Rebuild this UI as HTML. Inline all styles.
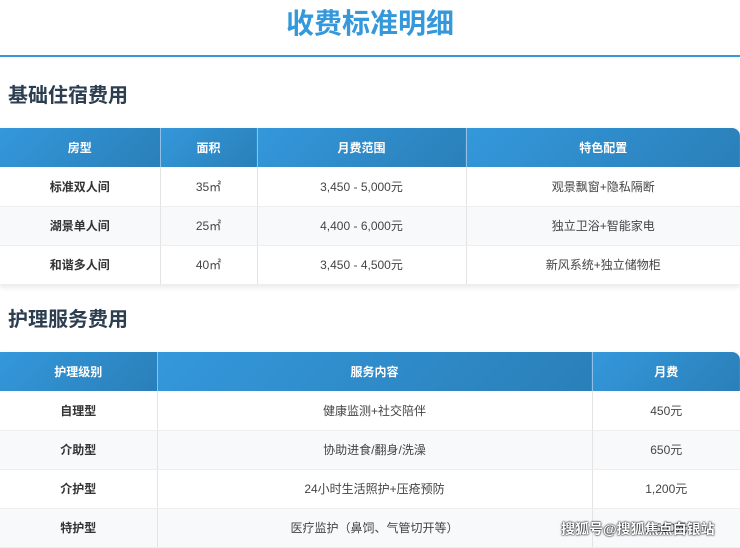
<!DOCTYPE html>
<html><head><meta charset="utf-8"><style>
*{margin:0;padding:0;box-sizing:border-box}
body{width:740px;height:547px;overflow:hidden;background:#fff;font-family:"Liberation Sans","Noto Sans CJK SC",sans-serif;position:relative}
h1{position:absolute;top:4px;left:0;width:740px;text-align:center;font-size:28px;color:#3498db;font-weight:bold;line-height:40px}
.line{position:absolute;top:55px;left:0;width:740px;height:2px;background:#3498db}
h2{position:absolute;left:8px;font-size:20px;color:#2c3e50;font-weight:bold;line-height:28px}
table{position:absolute;left:0;width:740px;border-collapse:collapse;font-size:12px;color:#444;box-shadow:0 2px 6px rgba(0,0,0,.1);border-radius:0 8px 0 0;overflow:hidden}
th{height:39px;color:#fff;font-weight:bold;background:linear-gradient(135deg,#3498db,#2a7fb8);border-right:1px solid #8fc1e6}
th:last-child{border-right:none}
td{height:39px;text-align:center;border-right:1px solid #e3e3e3;border-bottom:1px solid #eee}
td:last-child{border-right:none}
tr:nth-child(odd) td{background:#f8f9fa}
td:first-child{font-weight:bold;color:#333}
.wm{position:absolute;left:561px;top:519px;font-size:14px;color:#fff;font-weight:bold;text-shadow:0 0 2px #000,0 0 1px #000}
</style></head><body>
<h1>收费标准明细</h1>
<div class="line"></div>
<h2 style="top:82px">基础住宿费用</h2>
<table style="top:128px">
<tr><th style="width:160px">房型</th><th style="width:97px">面积</th><th style="width:209px">月费范围</th><th>特色配置</th></tr>
<tr><td>标准双人间</td><td>35㎡</td><td>3,450 - 5,000元</td><td>观景飘窗+隐私隔断</td></tr>
<tr><td>湖景单人间</td><td>25㎡</td><td>4,400 - 6,000元</td><td>独立卫浴+智能家电</td></tr>
<tr><td>和谐多人间</td><td>40㎡</td><td>3,450 - 4,500元</td><td>新风系统+独立储物柜</td></tr>
</table>
<h2 style="top:306px">护理服务费用</h2>
<table style="top:352px">
<tr><th style="width:157px">护理级别</th><th style="width:435px">服务内容</th><th>月费</th></tr>
<tr><td>自理型</td><td>健康监测+社交陪伴</td><td>450元</td></tr>
<tr><td>介助型</td><td>协助进食/翻身/洗澡</td><td>650元</td></tr>
<tr><td>介护型</td><td>24小时生活照护+压疮预防</td><td>1,200元</td></tr>
<tr><td>特护型</td><td>医疗监护（鼻饲、气管切开等）</td><td>2,500元</td></tr>
</table>
<div class="wm">搜狐号@搜狐焦点白银站</div>
</body></html>
